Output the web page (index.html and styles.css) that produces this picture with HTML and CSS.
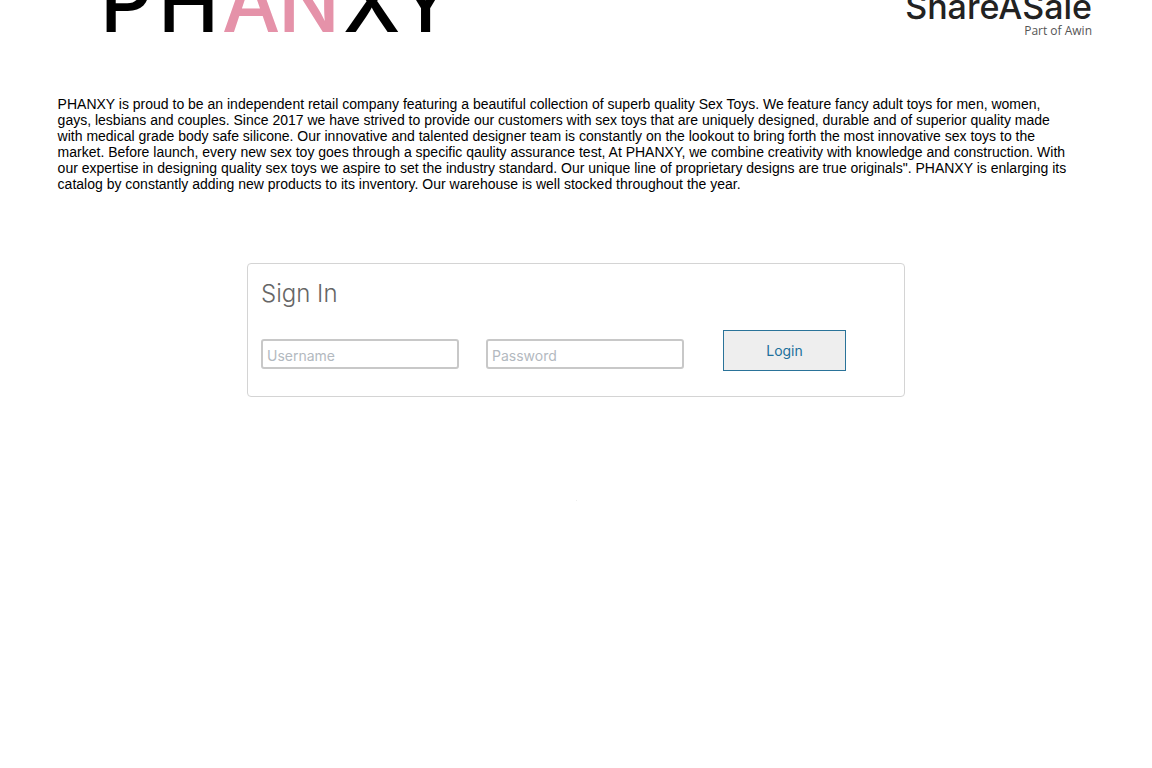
FILE: index.html
```
<!DOCTYPE html>
<html lang="en">
<head>
	<meta charset="UTF-8">
	<meta name="viewport" content="width=device-width, initial-scale=1">
	<title>PHANXY - ShareASale</title>
	<link rel="stylesheet" href="styles.css">
</head>
<body>
	<header class="header">
		<svg class="logo" width="400" height="48" role="img" aria-label="PHANXY">
			<text y="32" x="0 58 122 178 243 297"><tspan>PH</tspan><tspan class="pink">AN</tspan><tspan>XY</tspan></text>
		</svg>
		<div class="partner">
			<svg class="partner-name" width="200" height="24" role="img" aria-label="ShareASale">
				<text x="200" y="19" text-anchor="end">ShareASale</text>
			</svg>
			<span class="partner-sub">Part of Awin</span>
		</div>
	</header>
	<main>
		<p class="intro">PHANXY is proud to be an independent retail company featuring a beautiful collection of superb quality Sex Toys. We feature fancy adult toys for men, women, gays, lesbians and couples. Since 2017 we have strived to provide our customers with sex toys that are uniquely designed, durable and of superior quality made with medical grade body safe silicone. Our innovative and talented designer team is constantly on the lookout to bring forth the most innovative sex toys to the market. Before launch, every new sex toy goes through a specific qaulity assurance test, At PHANXY, we combine creativity with knowledge and construction. With our expertise in designing quality sex toys we aspire to set the industry standard. Our unique line of proprietary designs are true originals". PHANXY is enlarging its catalog by constantly adding new products to its inventory. Our warehouse is well stocked throughout the year.</p>
		<form class="signin" action="#" method="post">
			<h1>Sign In</h1>
			<div class="fields">
				<input type="text" name="username" placeholder="Username" aria-label="Username">
				<input type="password" name="password" placeholder="Password" aria-label="Password">
				<button type="submit">Login</button>
			</div>
		</form>
	</main>
	<div class="pixel"></div>
</body>
</html>
```
FILE: styles.css
```
* {
	box-sizing: border-box;
}
body {
	margin: 0;
	background: #fff;
	color: #000;
	font-family: "Liberation Sans", Arial, sans-serif;
	font-size: 14px;
	line-height: 16px;
}
.header {
	display: flex;
	justify-content: space-between;
	align-items: flex-start;
	padding: 0 60px 0 100px;
}
.logo {
	font-family: Inter, sans-serif;
	font-size: 82px;
	font-weight: 500;
}
.logo .pink {
	fill: #e592a9;
}
.partner {
	display: flex;
	flex-direction: column;
	align-items: flex-end;
}
.partner-name {
	font-family: Inter, sans-serif;
	font-size: 34px;
	font-weight: 500;
	fill: #222;
}
.partner-sub {
	color: #555;
	font-family: "Open Sans", sans-serif;
	font-size: 12px;
	line-height: 14px;
}
.intro {
	margin: 48px 7% 71px 5%;
}
.signin {
	width: 90%;
	max-width: 658px;
	margin: 0 auto;
	padding: 14px 13px 25px;
	border: 1px solid #d4d4d4;
	border-radius: 4px;
	font-family: Inter, sans-serif;
}
.signin h1 {
	margin: 0 0 20px;
	color: #666;
	font-size: 24px;
	font-weight: 300;
	line-height: 32px;
}
.fields {
	display: flex;
	flex-wrap: wrap;
	align-items: flex-end;
	gap: 27px;
}
.fields input {
	width: 198px;
	height: 30px;
	margin: 0 0 2px;
	padding: 2px 4px 0;
	border: 2px solid #c8c8c8;
	border-radius: 3px;
	background: #fff;
	font-family: Inter, sans-serif;
	font-size: 14px;
}
.fields input::placeholder {
	color: #b3b9c0;
}
.fields button {
	width: 123px;
	height: 41px;
	margin-left: 12px;
	border: 1px solid #2a7399;
	border-radius: 0;
	background: #eee;
	color: #20709c;
	font-family: Inter, sans-serif;
	font-size: 14px;
}
.pixel {
	width: 1px;
	height: 1px;
	margin: 103px auto 0;
	background: #eee;
}
```
